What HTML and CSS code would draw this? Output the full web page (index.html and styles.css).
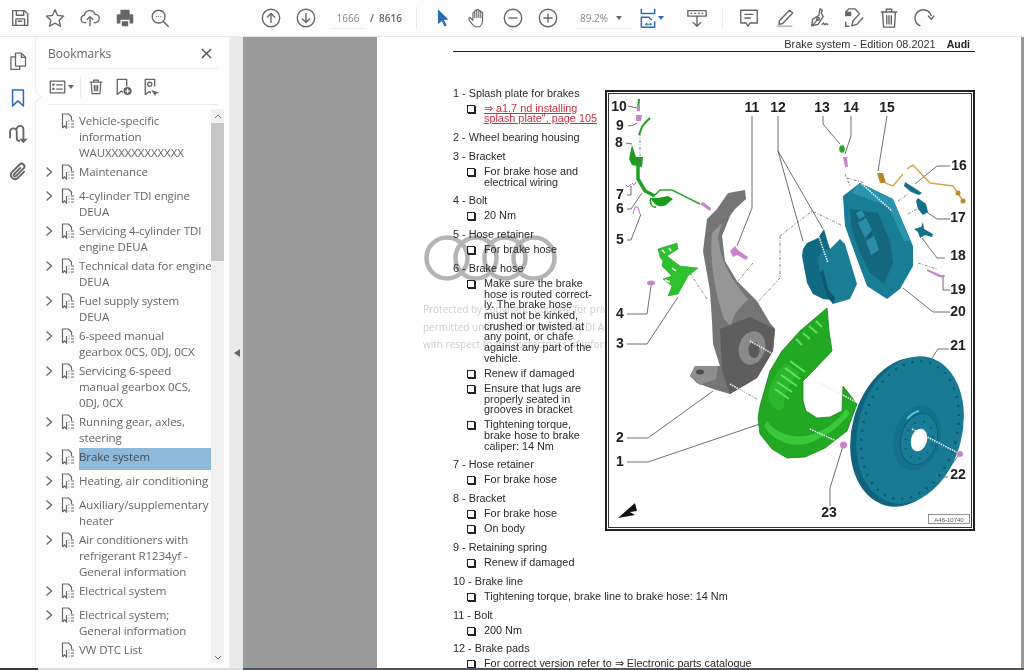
FILE: index.html
```html
<!DOCTYPE html>
<html lang="en">
<head>
<meta charset="utf-8">
<title>Brake system</title>
<link rel="stylesheet" href="styles.css">
</head>
<body>
<svg class="sprite" aria-hidden="true">
  <symbol id="bm" viewBox="0 0 14 16"><path d="M1.500 15V1h6l3 3v3M1.500 15l2-2.200L5.500 15V8M7.500 8h1M10 8h3M7.500 11h1M10 11h3M7.500 14h1M10 14h3" fill="none" stroke="#666" stroke-width="1.200"/></symbol>
  <symbol id="chev" viewBox="0 0 8 12"><path d="M1.500 1.500L6.500 6l-5 4.500" fill="none" stroke="#666" stroke-width="1.300"/></symbol>
</svg>
<div class="app">
  <header class="toolbar">
    <div class="tool-group">
      <button class="tool"><svg viewBox="0 0 24 24"><path d="M4 4h13l3.500 3.500V20H4zM8 4v5h8V4M7.500 20v-7h9.500v7M9.500 15.500h5" class="ln"/></svg></button>
      <button class="tool"><svg viewBox="0 0 24 24"><path d="M12 3l2.800 6.200 6.700.7-5 4.500 1.400 6.600L12 17.600 6.100 21l1.400-6.600-5-4.500 6.700-.7z" class="ln"/></svg></button>
      <button class="tool"><svg viewBox="0 0 24 24"><path d="M8 17H6.500a4 4 0 0 1-.6-8A6 6 0 0 1 17.500 8a4.500 4.500 0 0 1 .3 9H16M12 21v-10M8.500 14l3.500-3.500 3.500 3.500" class="ln"/></svg></button>
      <button class="tool"><svg viewBox="0 0 24 24"><path d="M7 3h10v5H7zM4.500 8h15A1.500 1.500 0 0 1 21 9.500V18h-4v-4H7v4H3V9.500A1.500 1.500 0 0 1 4.500 8zM8.500 15.500h7V21h-7z" fill="#666"/></svg></button>
      <button class="tool"><svg viewBox="0 0 24 24"><circle cx="10.500" cy="10.500" r="7" class="ln"/><path d="M15.500 15.500l6 6" class="ln"/><path d="M7.500 10.500h1M10 10.500h1M12.500 10.500h1" class="ln"/></svg></button>
    </div>
    <div class="tool-group nav-group">
      <button class="tool"><svg viewBox="0 0 24 24"><circle cx="12" cy="12" r="9.500" class="ln"/><path d="M12 17.500V7M7.500 11.500L12 7l4.500 4.500" class="ln"/></svg></button>
      <button class="tool"><svg viewBox="0 0 24 24"><circle cx="12" cy="12" r="9.500" class="ln"/><path d="M12 6.500V17M7.500 12.500L12 17l4.500-4.500" class="ln"/></svg></button>
    </div>
    <span class="page-input">1666</span>
    <span class="page-total">/&nbsp; 8616</span>
    <span class="tool-sep first-sep"></span>
    <div class="tool-group">
      <button class="tool"><svg viewBox="0 0 24 24"><path d="M6.500 2.500l11.500 11-5 .6 3 6-2.500 1.200-2.700-6-4.300 3.500z" fill="#2a6db4"/></svg></button>
      <button class="tool"><svg viewBox="0 0 24 24"><path d="M7 20c-2-2-4.500-5-5-7-.3-1.300 1.200-1.800 2-1l2.500 2.500V6.500c0-1.500 2-1.500 2 0V4.500c0-1.500 2.200-1.500 2.200 0v-.8c0-1.500 2.200-1.500 2.200 0v1.300c0-1.400 2.100-1.400 2.100 0v1.500c0-1.300 2-1.300 2 0V15c0 3-1.500 5-3 6.500H9zM8.500 6.500V12M10.700 4.500V12M12.900 3.700V12M15 5v7" class="ln thin"/></svg></button>
      <button class="tool"><svg viewBox="0 0 24 24"><circle cx="12" cy="12" r="9.500" class="ln"/><path d="M7 12h10" class="ln"/></svg></button>
      <button class="tool"><svg viewBox="0 0 24 24"><circle cx="12" cy="12" r="9.500" class="ln"/><path d="M7 12h10M12 7v10" class="ln"/></svg></button>
    </div>
    <span class="zoom-input">89.2%</span>
    <span class="caret zoom-caret"></span>
    <button class="tool fit"><svg viewBox="0 0 24 24"><path d="M4 1v5.500h16V1M4 23V11h9l3 3v1M4 23h16v-7" class="ln blue"/><path d="M9 19.500h7M9 19.500l2-1.500M9 19.500l2 1.500M16 19.500l-2-1.500M16 19.500l-2 1.500" class="ln blue thin"/></svg></button>
    <span class="caret blue-caret"></span>
    <button class="tool scroll-tool"><svg viewBox="0 0 24 24"><path d="M2 4h20v6H2zM12 10v11M7.500 16.500L12 21l4.500-4.500" class="ln"/><path d="M5 7h2M9 7h2M13 7h2M17 7h2" class="ln"/></svg></button>
    <span class="tool-sep"></span>
    <div class="tool-group">
      <button class="tool"><svg viewBox="0 0 24 24"><path d="M3 3.500h18v14h-8l-2 3.500-2-3.500H3zM7 8h10M7 12h7" class="ln"/></svg></button>
      <button class="tool"><svg viewBox="0 0 24 24"><path d="M7 15L18 3.500l3.500 3-11 11.500-4 1z" class="ln"/><path d="M4 21h17" stroke="#bbb" stroke-width="2"/></svg></button>
      <button class="tool"><svg viewBox="0 0 24 24"><path d="M13 2l2.500 1.500-1 3 2 4L11 19l-7 1.500 1-7 7-4.500zM5 20l6-7M15 19.500l2-2 1.500 2 1.500-1.500 2 1.500" class="ln"/><circle cx="11" cy="13" r="1.500" class="ln"/></svg></button>
      <button class="tool"><svg viewBox="0 0 24 24"><path d="M3 10V5.500L6.500 2H13l5 5.500L11 15l-1.500 5.500L15 19l7-7.500M7 21H3v-5" class="ln"/><path d="M3 5h6v5H3z" fill="#666"/></svg></button>
      <button class="tool"><svg viewBox="0 0 24 24"><path d="M3 5.500h18M9 5.500V2.500h6v3M5 5.500l1 16.500h12l1-16.500M9.500 9v10M12 9v10M14.500 9v10" class="ln"/></svg></button>
      <button class="tool"><svg viewBox="0 0 24 24"><path d="M8 20.500A9 9 0 1 1 20 10" class="ln"/><path d="M16.500 9.500l3.500 4 3-4" class="ln"/></svg></button>
    </div>
  </header>

  <main class="workspace">
    <nav class="rail">
      <button class="rail-btn"><svg viewBox="0 0 24 24"><path d="M9 2.500h7l5 5V18H9zM16 2.500v5h5M9 7H3.500v15H14v-4" class="ln"/></svg></button>
      <button class="rail-btn is-active"><svg viewBox="0 0 24 24"><path d="M5.500 2.500h13v19L12 15.500l-6.500 6z" class="ln blue"/></svg></button>
      <button class="rail-btn"><svg viewBox="0 0 24 24"><path d="M2.500 16V8a4 4 0 0 1 8 0v8a3 3 0 0 0 3 3h1M10.500 5a4 4 0 0 1 8 0v13" class="ln bold"/><path d="M13.500 16.500h10L18.500 22z" fill="#666"/></svg></button>
      <button class="rail-btn"><svg viewBox="0 0 24 24"><path d="M20 11l-8.500 8.500a5 5 0 0 1-7-7L14 3a3.300 3.300 0 0 1 4.700 4.700L9.500 17a1.600 1.600 0 0 1-2.300-2.300L15.500 6.500" class="ln bold"/></svg></button>
    </nav>

    <aside class="panel">
      <div class="panel-head">
        <span class="panel-title">Bookmarks</span>
        <svg class="panel-close" viewBox="0 0 12 12"><path d="M1 1l10 10M11 1L1 11" fill="none" stroke="#555" stroke-width="1.500"/></svg>
      </div>
      <div class="panel-tools">
        <svg class="pt-icon" viewBox="0 0 20 18"><path d="M1.500 2h17v14h-17zM8.500 6.500H16M8.500 11.500H16" class="ln"/><path d="M4 5h2.500v2.500H4zM4 10h2.500v2.500H4z" fill="#666"/></svg>
        <span class="caret"></span>
        <span class="pt-sep"></span>
        <svg class="pt-icon pt-trash" viewBox="0 0 20 20"><path d="M2 4.500h16M7 4.500V2h6v2.500M4 4.500l1 14.500h10l1-14.500M8 8v8M10 8v8M12 8v8" class="ln"/></svg>
        <svg class="pt-icon pt-add" viewBox="0 0 20 20"><path d="M2.500 18.500V1.500h10.500v8M2.500 18.500L7 14.500l2 1.500" class="ln"/><circle cx="14" cy="14.500" r="4.500" fill="#666"/><path d="M14 12v5M11.500 14.500h5" stroke="#fff" stroke-width="1.300"/></svg>
        <svg class="pt-icon pt-find" viewBox="0 0 20 20"><path d="M2.500 18.500V1.500H13v8M2.500 18.500L7 15l2 1.500" class="ln"/><circle cx="7.500" cy="7" r="2.300" class="ln"/><path d="M9 13l9 3.500-3.500 1-1 2.500z" fill="#666"/></svg>
      </div>
      <div class="tree-wrap">
        <ul class="tree">
          <li class="row"><span class="chev-slot"></span><svg class="bm-icon"><use href="#bm"/></svg><span class="label">Vehicle-specific<br>information<br>WAUXXXXXXXXXXXX</span></li>
          <li class="row"><svg class="chev"><use href="#chev"/></svg><svg class="bm-icon"><use href="#bm"/></svg><span class="label">Maintenance</span></li>
          <li class="row"><svg class="chev"><use href="#chev"/></svg><svg class="bm-icon"><use href="#bm"/></svg><span class="label">4-cylinder TDI engine<br>DEUA</span></li>
          <li class="row"><svg class="chev"><use href="#chev"/></svg><svg class="bm-icon"><use href="#bm"/></svg><span class="label">Servicing 4-cylinder TDI<br>engine DEUA</span></li>
          <li class="row"><svg class="chev"><use href="#chev"/></svg><svg class="bm-icon"><use href="#bm"/></svg><span class="label">Technical data for engine<br>DEUA</span></li>
          <li class="row"><svg class="chev"><use href="#chev"/></svg><svg class="bm-icon"><use href="#bm"/></svg><span class="label">Fuel supply system<br>DEUA</span></li>
          <li class="row"><svg class="chev"><use href="#chev"/></svg><svg class="bm-icon"><use href="#bm"/></svg><span class="label">6-speed manual<br>gearbox 0CS, 0DJ, 0CX</span></li>
          <li class="row"><svg class="chev"><use href="#chev"/></svg><svg class="bm-icon"><use href="#bm"/></svg><span class="label">Servicing 6-speed<br>manual gearbox 0CS,<br>0DJ, 0CX</span></li>
          <li class="row"><svg class="chev"><use href="#chev"/></svg><svg class="bm-icon"><use href="#bm"/></svg><span class="label">Running gear, axles,<br>steering</span></li>
          <li class="row is-selected"><svg class="chev"><use href="#chev"/></svg><svg class="bm-icon"><use href="#bm"/></svg><span class="label">Brake system</span></li>
          <li class="row"><svg class="chev"><use href="#chev"/></svg><svg class="bm-icon"><use href="#bm"/></svg><span class="label">Heating, air conditioning</span></li>
          <li class="row"><svg class="chev"><use href="#chev"/></svg><svg class="bm-icon"><use href="#bm"/></svg><span class="label">Auxiliary/supplementary<br>heater</span></li>
          <li class="row"><svg class="chev"><use href="#chev"/></svg><svg class="bm-icon"><use href="#bm"/></svg><span class="label">Air conditioners with<br>refrigerant R1234yf -<br>General information</span></li>
          <li class="row"><svg class="chev"><use href="#chev"/></svg><svg class="bm-icon"><use href="#bm"/></svg><span class="label">Electrical system</span></li>
          <li class="row"><svg class="chev"><use href="#chev"/></svg><svg class="bm-icon"><use href="#bm"/></svg><span class="label">Electrical system;<br>General information</span></li>
          <li class="row"><span class="chev-slot"></span><svg class="bm-icon"><use href="#bm"/></svg><span class="label">VW DTC List</span></li>
        </ul>
        <div class="scrollbar">
          <svg class="sb-arrow" viewBox="0 0 8 5"><path d="M1 4l3-3 3 3" fill="none" stroke="#777" stroke-width="1"/></svg>
          <div class="sb-thumb"></div>
          <svg class="sb-arrow sb-down" viewBox="0 0 8 5"><path d="M1 1l3 3 3-3" fill="none" stroke="#777" stroke-width="1"/></svg>
        </div>
      </div>
    </aside>

    <div class="collapse-strip"><span class="collapse-arrow"></span></div>
    <div class="canvas-gap"></div>

    <section class="page">
      <div class="watermark">
        <svg class="wm-rings" viewBox="0 0 134 46"><g fill="none" stroke="#b4b4b4" stroke-width="4.500"><circle cx="23" cy="23" r="20.500"/><circle cx="52" cy="23" r="20.500"/><circle cx="81" cy="23" r="20.500"/><circle cx="110" cy="23" r="20.500"/></g></svg>
        <p class="wm-line">Protected by copyright. Copying for private or commercial purposes, in part or in whole, is not</p>
        <p class="wm-line">permitted unless authorised by AUDI AG. AUDI AG does not guarantee or accept any liability</p>
        <p class="wm-line">with respect to the correctness of information in this document.</p>
      </div>
      <div class="sheet">
        <div class="sheet-head">
          <span>Brake system - Edition 08.2021</span>
          <span class="sheet-brand">Audi</span>
        </div>
        <div class="sheet-body">
          <figure class="figure">
            <svg viewBox="605 89 370 441" width="370" height="441">
              <rect x="606" y="90" width="368" height="439" fill="#fff" stroke="#222" stroke-width="2"/>
              <rect x="608.500" y="92.500" width="363" height="434" fill="none" stroke="#333"/>

              <!-- leaders -->
              <g class="leader">
                <path d="M628 105l9 2M628 125q6 0 9-3M626 142l6 1M627 194h4v-9M627 208h4l11-16M627 239h4l10-26M627 313h20l4-28M627 343h20l31-47M627 437h21l65-47M627 461h21l112-38"/>
                <path d="M752 115V207l-15 38M778 115v35l25 90M778 150l45 78M823 115v8l17 20M851 115v20l-6 18M887 115l-9 55M950 165h-13l-22 18M950 218h-13l-12-8M945 257h-8l-15-20M950 289h-7v-14M950 311h-17l-30-24M949 348h-11l-10 15M948 476h-5l15-21M830 505v-18l13-42"/>
              </g>
              <g class="dash">
                <path d="M845 173l5 12M847 177l18 5M753 262l-15 18M780 235v42l-23 25M780 235l32-25l31 15M898 200l10-7M908 213l9-5M918 262l19 6M690 272l17 26M730 383l27 15M640 132v23"/>
              </g>

              <!-- knuckle -->
              <path d="M728 192L745 189L746 198L735 208L730 215L722 235L725 260L737 280L750 293L757 300L770 322L775 328L773 350L757 377L730 393L713 388L697 382L690 375L695 365L720 365L713 343L712 320L710 290L703 250L707 218L717 208Z" fill="#757575"/>
              <path d="M712 232C709 262 716 295 724 318L731 325C733 312 742 305 748 298C734 282 720 262 718 236L722 222Z" fill="#969696"/>
              <path d="M720 328L750 316L775 328L773 350L757 377L730 393L722 370Z" fill="#5e5e5e"/>
              <ellipse cx="752" cy="347" rx="13" ry="17" fill="#8a8a8a" transform="rotate(15 752 347)"/>
              <ellipse cx="754" cy="349" rx="5.500" ry="8" fill="#5a5a5a"/>
              <path d="M690 375L695 365L718 365L716 378L700 384Z" fill="#8e8e8e"/>
              <ellipse cx="700" cy="371" rx="4" ry="2.500" fill="#4e4e4e"/>

              <!-- shield -->
              <path d="M827 307L800 330L782 350L770 370L760 405L758 417L760 433L772 448L787 457L805 456L825 447L847 430L857 403L843 385L842 410L830 416L817 417L806 410L803 400L803 380L813 370L832 350L829 330Z" fill="#22a822" stroke="#178517" stroke-width=".8"/>
              <path d="M764 425C775 442 795 448 812 441C828 434 842 424 850 412L846 408C836 422 824 430 810 434C794 438 778 434 767 420Z" fill="#39c839"/>
              <path d="M768 395C770 380 778 370 786 362L800 372C790 380 784 392 784 406C780 412 772 410 768 395Z" fill="#2cb82c"/>
              <g stroke="#5ee05e" stroke-width="2" fill="none">
                <path d="M775 388l14 10M777 381l15 10M781 374l16 11M785 367l15 11M790 360l15 11M796 338l6 6M803 332l7 6M809 325l8 7M816 320l6 6"/>
              </g>
              <g class="white-dash"><path d="M750 340l23 13M810 377l50 26M810 428l33 15M730 383l14 8"/></g>

              <!-- disc -->
              <ellipse cx="905" cy="431" rx="53" ry="76" fill="#0f647c" transform="rotate(15 905 431)"/>
              <ellipse cx="910" cy="429" rx="52" ry="75" fill="#187a94" transform="rotate(15 910 429)"/>
              <ellipse cx="910" cy="429" rx="47" ry="70" fill="none" stroke="#0d5a70" stroke-width="2.500" stroke-dasharray="2 7" transform="rotate(15 910 429)"/>
              <ellipse cx="917" cy="437" rx="23" ry="33" fill="#15708a" transform="rotate(15 917 437)"/>
              <ellipse cx="919" cy="438" rx="18" ry="26" fill="#1a7d98" stroke="#0e6178" transform="rotate(15 919 438)"/>
              <ellipse cx="919" cy="439" rx="8" ry="11.500" fill="#fff" transform="rotate(15 919 439)"/>
              <ellipse cx="919" cy="439" rx="13.500" ry="19" fill="none" stroke="#0d5a70" stroke-width="2" stroke-dasharray="1.500 8" transform="rotate(15 919 439)"/>
              <path d="M907 418c4-5 8-7 12-8" stroke="#57c2dc" stroke-width="2" fill="none"/>
              <g class="white-dash"><path d="M912 428l46 24"/></g>

              <!-- pads -->
              <path d="M803 248L807 242L818 237L824 228L828 242L835 262L840 300L823 298L813 293L807 282L802 255Z" fill="#0f6a82"/>
              <path d="M818 258L822 250L830 248L840 238L845 243L857 283L850 298L833 303L827 295L820 272Z" fill="#1a7c95"/>
              <path d="M820 272L827 295L833 303L835 297L828 288L823 268Z" fill="#0d5a70"/>
              <g class="white-dash"><path d="M819 236l9 26"/></g>

              <!-- caliper -->
              <path d="M843 195L860 182L893 198L913 245L913 265L900 288L887 298L867 285L857 258L845 225Z" fill="#1a7d96"/>
              <path d="M860 182L893 198L910 240L904 240L888 205L852 192Z" fill="#2b95ae"/>
              <path d="M850 208L878 212L890 240L893 262L884 283L870 272L860 252L851 226Z" fill="#14687e"/>
              <path d="M858 222l8-5 6 12-7 8zM866 240l8-5 5 14-8 5zM856 212l6-3 3 6-6 3z" fill="#2a8ea8"/>
              <g class="white-dash"><path d="M862 183l30 27M902 212l18 50"/></g>

              <!-- small parts: teal -->
              <path d="M905 181l8 5 9 6-3 2-8-3-7-6z" fill="#14708a"/>
              <path d="M918 197l8 6 2 8-5 3-5-6-2-8z" fill="#14708a"/>
              <path d="M923 221l1 7 9 5-1 3-7-2-5 3-2-6-4-3 7-2z" fill="#14708a"/>

              <!-- green hose + parts -->
              <path d="M639 98l-1 10M650 117l-5 5-3 4-3 8" fill="none" stroke="#20a020" stroke-width="2"/>
              <path d="M632 144L636 156L643 156L642 166L632 164L629 158Z" fill="#229a22"/>
              <path d="M638 165v13l7 12 10 5" fill="none" stroke="#20a020" stroke-width="3.500"/>
              <path d="M655 194l5-5h12l28 14" fill="none" stroke="#2aa62a" stroke-width="1.500"/>
              <path d="M651 197c3 8 10 10 15 7l7-6-5-3-10 2z" fill="#1c9a1c"/>
              <path d="M651 197c-2 5 1 10 5 9" fill="none" stroke="#1c9a1c" stroke-width="1.500"/>

              <!-- bracket -->
              <path d="M658 248L677 242L678 248L667 255L680 265L698 267L688 275L678 293L668 295L672 285L663 278L672 275L662 265L663 260L660 256Z" fill="#2cc22c" stroke="#169016" stroke-width=".5"/>
              <path d="M662 249l3 3M669 247l2 3M665 279l5 2M672 267l4 3" stroke="#fff" stroke-width="1.400" fill="none"/>

              <!-- purple -->
              <g fill="#c884c8">
                <path d="M700 203l3-2 8 6-1 3z"/>
                <path d="M730 250l5-5 3 4 10 7-2 3-9-5-4 2z"/>
                <ellipse cx="651" cy="282" rx="4" ry="2.500"/>
                <path d="M637 104h3v6h-3zM636 114h6l-1 6h-5z"/>
                <path d="M843 156h4l1 10h-3z"/>
                <path d="M927 268l14 6 4 0-1 3-5-1-12-6z"/>
                <circle cx="960" cy="453" r="3"/>
                <circle cx="843.500" cy="444" r="3.500"/>
              </g>
              <path d="M626 184l2 2 3-3M632 182l2 2 2-3M640 213l-2-7h-3l-2 7" fill="none" stroke="#c06cc0" stroke-width="1"/>
              <ellipse cx="842" cy="148" rx="2.800" ry="3.800" fill="#22aa22"/>

              <!-- orange sensor -->
              <path d="M877 172l6 0 3 10-6 0z" fill="#b88a28"/>
              <path d="M885 182l8 3 10-12M907 168l6-4 17 18 23 3 10 15" fill="none" stroke="#d5a545" stroke-width="1.400"/>
              <circle cx="958" cy="192" r="2.500" fill="#b88a28"/>
              <circle cx="963" cy="200" r="2.500" fill="#b88a28"/>

              <!-- arrow -->
              <path d="M618 517l17-15 2 8-7 1 5 3z" fill="#111"/>

              <!-- id box -->
              <rect x="928.500" y="513.500" width="41" height="9" fill="#fff" stroke="#666" stroke-width=".7"/>
              <text x="949" y="520.500" class="fig-id">A46-10740</text>

              <!-- callouts -->
              <g class="num">
                <text x="619" y="110">10</text><text x="620" y="129">9</text><text x="619" y="146">8</text><text x="620" y="198">7</text><text x="620" y="212">6</text><text x="620" y="243">5</text><text x="620" y="317">4</text><text x="620" y="347">3</text><text x="620" y="441">2</text><text x="620" y="465">1</text>
                <text x="752" y="111">11</text><text x="778" y="111">12</text><text x="822" y="111">13</text><text x="851" y="111">14</text><text x="887" y="111">15</text>
                <text x="959" y="169">16</text><text x="958" y="221">17</text><text x="958" y="259">18</text><text x="958" y="293">19</text><text x="958" y="315">20</text><text x="958" y="349">21</text><text x="958" y="478">22</text><text x="829" y="516">23</text>
              </g>
            </svg>
          </figure>

          <div class="item"><h4>1 - Splash plate for brakes</h4>
            <p class="sub"><a class="xref">⇒ a1.7 nd installing<br>splash plate", page 105</a></p></div>
          <div class="item"><h4>2 - Wheel bearing housing</h4></div>
          <div class="item"><h4>3 - Bracket</h4>
            <p class="sub">For brake hose and<br>electrical wiring</p></div>
          <div class="item"><h4>4 - Bolt</h4>
            <p class="sub">20 Nm</p></div>
          <div class="item"><h4>5 - Hose retainer</h4>
            <p class="sub">For brake hose</p></div>
          <div class="item"><h4>6 - Brake hose</h4>
            <p class="sub">Make sure the brake<br>hose is routed correct-<br>ly. The brake hose<br>must not be kinked,<br>crushed or twisted at<br>any point, or chafe<br>against any part of the<br>vehicle.</p>
            <p class="sub">Renew if damaged</p>
            <p class="sub">Ensure that lugs are<br>properly seated in<br>grooves in bracket</p>
            <p class="sub">Tightening torque,<br>brake hose to brake<br>caliper: 14 Nm</p></div>
          <div class="item"><h4>7 - Hose retainer</h4>
            <p class="sub">For brake hose</p></div>
          <div class="item"><h4>8 - Bracket</h4>
            <p class="sub">For brake hose</p>
            <p class="sub">On body</p></div>
          <div class="item"><h4>9 - Retaining spring</h4>
            <p class="sub">Renew if damaged</p></div>
          <div class="item"><h4>10 - Brake line</h4>
            <p class="sub">Tightening torque, brake line to brake hose: 14 Nm</p></div>
          <div class="item"><h4>11 - Bolt</h4>
            <p class="sub">200 Nm</p></div>
          <div class="item"><h4>12 - Brake pads</h4>
            <p class="sub">For correct version refer to ⇒ Electronic parts catalogue</p></div>
        </div>
      </div>
    </section>
    <div class="page-edge"></div>
  </main>

  <footer class="bottom-edge">
    <span class="edge-a"></span><span class="edge-b"></span><span class="edge-c"></span>
  </footer>
</div>
</body>
</html>
```
FILE: styles.css
```css
* { box-sizing: border-box; }
html, body { margin: 0; height: 100%; overflow: hidden; background: #fff; }
body { font-family: "Open Sans", "Liberation Sans", sans-serif; color: #666; }
button { border: 0; background: none; padding: 0; margin: 0; }
svg { display: block; }
p, h4, ul, figure { margin: 0; padding: 0; }
.sprite { position: absolute; width: 0; height: 0; }

.ln { fill: none; stroke: #666; stroke-width: 1.500; stroke-linejoin: round; }
.ln.thin { stroke-width: 1.200; }
.ln.bold { stroke-width: 2.200; }
.ln.blue { stroke: #2a6db4; stroke-width: 1.800; }
.ln.blue.thin { stroke-width: 1.200; }

.app { display: grid; grid-template-rows: 37px 631px 2px; height: 670px; width: 1024px; filter: blur(.35px); }

/* toolbar */
.toolbar { display: flex; align-items: center; padding-left: 2px; background: #fdfdfd; border-bottom: 1px solid #e6e6e6; font-size: 10px; }
.tool-group { display: flex; }
.tool { width: 35px; height: 36px; display: flex; align-items: center; justify-content: center; flex: none; }
.tool svg { width: 22px; height: 22px; }
.nav-group { margin-left: 76px; }
.page-input { width: 34px; margin-left: 8px; text-align: center; color: #888; border-bottom: 1px solid #eee; line-height: 20px; height: 21px; }
.page-total { margin-left: 5px; color: #666; font-weight: 600; white-space: nowrap; width: 34px; }
.tool-sep { width: 1px; height: 22px; background: #e9e9e9; flex: none; margin: 0 8px; }
.first-sep { margin: 0 8px 0 12px; }
.zoom-input { width: 56px; margin-left: 12px; padding-left: 3px; color: #888; border-bottom: 1px solid #eee; line-height: 20px; height: 21px; }
.caret { width: 0; height: 0; border: 3.500px solid transparent; border-top: 4px solid #666; border-bottom: 0; flex: none; }
.zoom-caret { margin-left: -17px; }
.fit { margin-left: 8px; width: 35px; }
.fit svg { width: 20px; height: 22px; }
.blue-caret { border-top-color: #2a6db4; margin-left: -7px; }
.scroll-tool { margin-left: 15px; }
.scroll-tool + .tool-sep { margin: 0 8px; }

/* layout */
.workspace { display: flex; min-height: 0; overflow: hidden; }
.rail { width: 36px; flex: none; display: flex; flex-direction: column; align-items: center; padding-top: 5px; background: #fdfdfd; border-right: 1px solid #ececec; }
.rail-btn { width: 36px; height: 37px; display: flex; align-items: center; justify-content: center; position: relative; }
.rail-btn svg { width: 20px; height: 22px; }
.is-active::after { content: ""; position: absolute; right: -4px; top: 14px; width: 7px; height: 7px; background: #fdfdfd; border-top: 1px solid #ececec; border-right: 1px solid #ececec; transform: rotate(45deg); }

/* panel */
.panel { width: 193px; flex: none; background: #fdfdfd; display: flex; flex-direction: column; padding-left: 12px; }
.panel-head { height: 32px; margin-right: 11px; display: flex; align-items: center; justify-content: space-between; border-bottom: 1px solid #ebebeb; padding-top: 1px; }
.panel-title { font-size: 12px; color: #666; }
.panel-close { width: 11px; height: 11px; margin-right: 6px; }
.panel-tools { height: 36px; margin-right: 11px; display: flex; align-items: center; padding-left: 1px; border-bottom: 1px solid #ebebeb; }
.pt-icon { width: 17px; height: 16px; flex: none; }
.panel-tools .caret { margin-left: 2px; }
.pt-sep { width: 1px; height: 22px; background: #ececec; margin: 0 7px 0 6px; }
.pt-trash { width: 16px; height: 17px; }
.pt-add { margin-left: 11px; width: 18px; height: 18px; }
.pt-find { margin-left: 10px; width: 18px; height: 18px; }
.tree-wrap { flex: 1; display: flex; min-height: 0; margin-left: -12px; padding-top: 7px; }
.tree { list-style: none; flex: none; width: 175px; padding-top: 1px; }
.row { display: flex; min-height: 24px; padding-bottom: 3px; padding-left: 9px; font-size: 11.500px; letter-spacing: -.08px; line-height: 16px; color: #666; }
.chev, .chev-slot { width: 8px; height: 12px; flex: none; margin-top: 2px; }
.bm-icon { width: 14px; height: 16px; flex: none; margin-left: 8px; }
.label { margin-left: 4px; white-space: nowrap; flex: 1; }
.is-selected { padding-bottom: 0; }
.is-selected .label { background: #8fb9d8; color: #3f4c57; margin-top: -1px; padding-top: 1px; height: 22px; margin-bottom: 2px; }
.scrollbar { width: 13px; flex: none; background: #f1f1f1; display: flex; flex-direction: column; margin-top: -3px; margin-bottom: 5px; }
.sb-arrow { width: 8px; height: 5px; margin: 5px auto 4px; flex: none; }
.sb-thumb { height: 138px; background: #c6c6c6; flex: none; }
.sb-down { margin: auto auto 3px; }

.collapse-strip { width: 14px; flex: none; background: #e9e9e9; border-left: 1px solid #f3f3f3; display: flex; align-items: center; justify-content: center; }
.collapse-arrow { width: 0; height: 0; border: 4.500px solid transparent; border-right: 6px solid #666; border-left: 0; }
.canvas-gap { width: 134px; flex: none; background: #9a9a9a; }
.page-edge { width: 3px; flex: none; background: #9a9a9a; }

/* page */
.page { width: 644px; flex: none; background: #fff; position: relative; overflow: hidden; padding-left: 76px; font-family: "Liberation Sans", Arial, sans-serif; color: #2a2a2a; }
.watermark { position: absolute; left: 46px; top: 198px; width: 560px; font-family: "Open Sans", sans-serif; font-size: 10px; color: #cdcdcd; white-space: nowrap; }
.wm-rings { width: 134px; height: 46px; margin-left: 1px; margin-bottom: 20px; }
.wm-line { line-height: 17.500px; }
.sheet { width: 522px; position: relative; }
.sheet-head { height: 15px; border-bottom: 1px solid #222; display: flex; justify-content: flex-end; align-items: center; gap: 11px; font-size: 10.900px; padding-right: 5px; line-height: 14px; color: #333; }
.sheet-brand { font-weight: 700; font-size: 10.500px; color: #222; }
.sheet-body { padding-top: 35.500px; font-size: 10.850px; line-height: 10.700px; }
.figure { float: right; margin-top: 2px; position: relative; background: #fff; }
.item { margin-bottom: 8.100px; }
.item h4 { font-weight: 400; font-size: 10.850px; line-height: 10.700px; white-space: nowrap; }
.sub { margin-top: 4.300px; padding-left: 31px; position: relative; white-space: nowrap; }
.sub::before { content: ""; position: absolute; left: 14px; top: 2px; width: 6px; height: 6px; border: 1px solid #222; box-shadow: 1px 1px 0 #222; }
.xref { color: #cc2f45; text-decoration: underline; }

/* diagram */
.leader { fill: none; stroke: #4a4a4a; stroke-width: .8; }
.dash { fill: none; stroke: #555; stroke-width: .7; stroke-dasharray: 3 1.500 1 1.500; }
.white-dash { fill: none; stroke: #e8f4f4; stroke-width: 1.600; stroke-dasharray: 1.500 1; }
.num { font: 700 14px "Liberation Sans", Arial, sans-serif; fill: #222; text-anchor: middle; }
.fig-id { font: 400 6px "Liberation Sans", Arial, sans-serif; fill: #555; text-anchor: middle; }

/* bottom */
.bottom-edge { display: flex; height: 2px; }
.edge-a { width: 38px; background: #3a3a3a; }
.edge-b { width: 205px; background: #dcdcdc; }
.edge-c { flex: 1; background: #4a5560; }
```
